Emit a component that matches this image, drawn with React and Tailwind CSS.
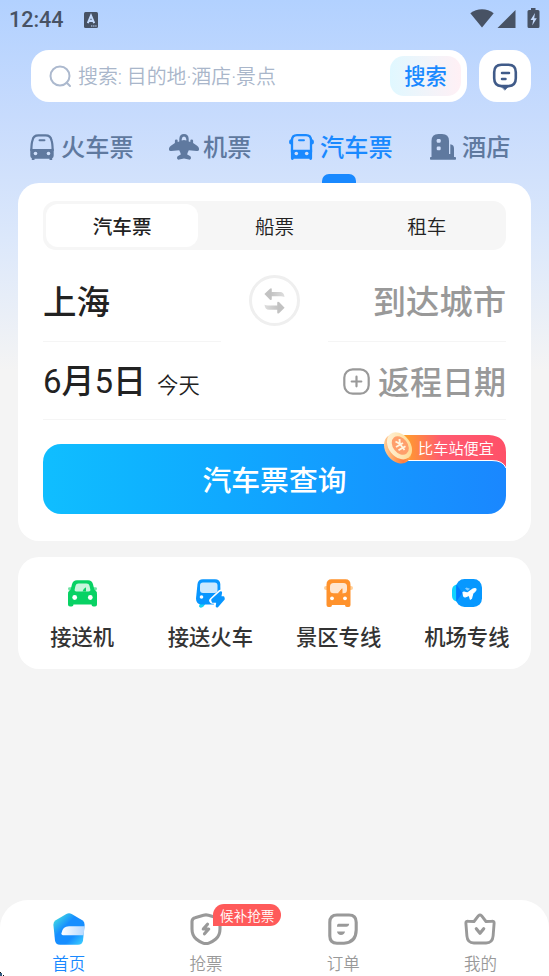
import { useState } from "react";

function ScanIcon() {
  return (
    <svg width="14" height="16" viewBox="0 0 14 16">
      <rect width="14" height="16" rx="1.5" fill="#475264" />
      <path d="M3.800 11.200 7 3.500l3.200 7.700M4.800 8.900h4.400" fill="none" stroke="#c3dafd" strokeWidth="2" />
      <path d="M7 14h6" stroke="#c3dafd" strokeWidth="1.2" strokeDasharray="1.4 0.7" />
    </svg>
  );
}

function StatusIcons() {
  return (
    <div className="flex items-start">
      <svg width="24" height="19" viewBox="0 0 24 19">
        <path d="M0.3 4.3C7-1 17-1 23.7 4.3L12 18.5Z" fill="#475264" />
      </svg>
      <svg className="ml-[3px] mt-px" width="19" height="18" viewBox="0 0 19 18">
        <path d="M18.5 0v18H0.5Z" fill="#475264" />
      </svg>
      <svg className="-mt-px ml-[11px]" width="13" height="20" viewBox="0 0 13 20">
        <path d="M4 0h4.500v2H11q1.500 0 1.500 1.500v15Q12.500 20 11 20H2Q.5 20 .5 18.500v-15Q.5 2 2 2h2Z" fill="#475264" />
        <path d="M8 5 3.500 12h2.700L5.200 17.500 9.800 10.300H7.200Z" fill="#c3dafd" />
      </svg>
    </div>
  );
}

function SearchIcon() {
  return (
    <svg width="23" height="23" viewBox="0 0 23 23" fill="none" stroke="#acb9ce" strokeWidth="2">
      <circle cx="11" cy="11" r="9.500" />
      <path d="m17.500 17.500 3.500 3.500" strokeLinecap="round" />
    </svg>
  );
}

function ChatIcon() {
  return (
    <svg width="26" height="28" viewBox="0 0 26 28" fill="none" stroke="#405b89" strokeLinecap="round">
      <path d="M9.500 1.800h7q7.300 0 7.300 7.500v6q0 7.500-7.300 7.800h-7q-7.300-.3-7.300-7.800v-6Q2.200 1.800 9.500 1.800Z" strokeWidth="2.600" />
      <path d="M9.500 23.500h7L13 27Z" fill="#405b89" strokeWidth="0.6" strokeLinejoin="round" />
      <path d="M10 10h7M10 16h3.500" strokeWidth="2.500" />
    </svg>
  );
}

function TrainIcon() {
  return (
    <svg width="24" height="26" viewBox="0 0 24 26">
      <path d="M8.500 1.300h7q5.300 0 5.900 4.800Q22.600 9 22.600 16H1.400Q1.400 9 2.600 6.100 3.200 1.300 8.500 1.300Z" fill="none" stroke="#5f799f" strokeWidth="2.200" />
      <path d="M.3 14.500Q4 17 7 17h10q3 0 6.700-2.500v7q0 2.300-1.500 2.700V26h-2.700v-1.200h-15V26H1.800v-1.800Q.3 23.800.3 21.500Z" fill="#5f799f" />
      <path d="M9.500 6.200h5" stroke="#5f799f" strokeWidth="1.900" strokeLinecap="round" />
      <circle cx="5.500" cy="19.500" r="1.800" fill="#d0e0fb" />
      <circle cx="18.500" cy="19.500" r="1.800" fill="#d0e0fb" />
    </svg>
  );
}

function PlaneIcon() {
  return (
    <svg width="30" height="26" viewBox="0 0 30 26" fill="#5f799f">
      <path d="M10.300 7V5Q10.500 0 15 0t4.700 5v2.500l1.600.5V6.700q0-1.200 1.400-1.200T24.100 6.700V9l4 2.700q2.200 1.600 1.900 4-.3 1.500-2.300 1.200l-7.900-.7q-1.500 2.800-1.600 4.300l2.800 1.500q1.300 1 .9 2.600-.5 1.400-2.100.9L15 24.500l-4.800 1q-1.600.5-2.100-.9-.4-1.600.9-2.600l2.800-1.500q-.1-1.500-1.600-4.300l-7.900.7q-2 .3-2.300-1.200-.3-2.400 1.900-4L5.900 9V6.700q0-1.200 1.400-1.200t1.400 1.200V8l1.600-.5Z" />
      <path d="M12.700 6.600V5.200Q13 2.600 15 2.600t2.300 2.600v1.400Q15 5.600 12.700 6.600Z" fill="#cfdffc" />
    </svg>
  );
}

function BusIcon() {
  return (
    <svg width="25" height="26" viewBox="0 0 25 26" fill="#1989ff">
      <path d="M8 1.200h9q5 0 5 5.300V17H3V6.500Q3 1.200 8 1.200Z" fill="none" stroke="#1989ff" strokeWidth="2.300" />
      <path d="M1.900 15.500Q4 17 7 17h11q3 0 5.100-1.500v8.800q0 1.700-1.400 1.700-1.200 0-1.400-1.200H4.700Q4.500 26 3.300 26q-1.400 0-1.400-1.700Z" />
      <path d="M2.300 5v5.500Q0 10.500 0 8t2.300-3ZM22.700 5v5.500q2.300 0 2.300-2.500T22.700 5Z" />
      <path d="M10 6.200h5" stroke="#1989ff" strokeWidth="1.900" strokeLinecap="round" />
      <circle cx="7.300" cy="19.500" r="1.800" fill="#d0e0fb" />
      <circle cx="17.700" cy="19.500" r="1.800" fill="#d0e0fb" />
    </svg>
  );
}

function HotelIcon() {
  return (
    <svg width="26" height="26" viewBox="0 0 26 26" fill="#5f799f">
      <path d="M1.500 24V7Q1.500 0 8.500 0H12q7 0 7 7v17Z" />
      <path d="M20.300 10.300q3.700.5 3.700 4.200V24h-3.700Z" />
      <path d="M.8 23h24.400q.8 0 .8 1v1q0 .7-.8.7H.8Q0 25.700 0 25v-1q0-1 .8-1ZM18 20h3v4h-3Z" />
      <rect x="6.700" y="5" width="4" height="3.800" rx="1.200" fill="#cfdffc" />
      <rect x="6.700" y="12.500" width="4" height="3.800" rx="1.200" fill="#cfdffc" />
    </svg>
  );
}

function SwapIcon() {
  return (
    <svg width="21" height="26" viewBox="0 0 21 26">
      <defs>
        <linearGradient id="swapTop" x1="0" x2="1">
          <stop offset=".3" stopColor="#c2c2c2" />
          <stop offset="1" stopColor="#dedede" />
        </linearGradient>
        <linearGradient id="swapBottom" x1="1" x2="0">
          <stop offset=".3" stopColor="#c2c2c2" />
          <stop offset="1" stopColor="#dedede" />
        </linearGradient>
      </defs>
      <path d="M.4 6 6 .7q1.800-1 1.800.8V4H16q4 0 4.500 5-1.500-.8-3.500-.8H7.800v2.600q0 1.900-1.800.9Z" fill="url(#swapTop)" />
      <path d="M20.600 19.700 15 25.200q-1.800 1-1.800-.8v-2.600H5q-4 0-4.500-5 1.500.8 3.500.8h9.200V15q0-1.900 1.800-.9Z" fill="url(#swapBottom)" />
    </svg>
  );
}

function PlusIcon() {
  return (
    <svg width="27" height="27" viewBox="0 0 27 27" fill="none" stroke="#999" strokeWidth="2.200" strokeLinecap="round">
      <rect x="1.300" y="1.300" width="24.400" height="24.400" rx="8.500" />
      <path d="M8.700 13.500h9.600M13.500 8.700v9.600" />
    </svg>
  );
}

function CoinIcon() {
  return (
    <svg width="32" height="34" viewBox="0 0 32 34">
      <defs>
        <linearGradient id="coinEdge" x1="0" y1="0" x2="1" y2="1">
          <stop offset="0" stopColor="#ffe6b8" />
          <stop offset=".45" stopColor="#ff9a55" />
          <stop offset=".65" stopColor="#ff7c3e" />
          <stop offset="1" stopColor="#ffd257" />
        </linearGradient>
        <linearGradient id="coinFace" x1="0" y1="0" x2="1" y2="1">
          <stop offset="0" stopColor="#fff6e4" />
          <stop offset="1" stopColor="#ffd584" />
        </linearGradient>
      </defs>
      <ellipse cx="14.500" cy="17" rx="11.700" ry="16" transform="rotate(-38 14.500 17)" fill="url(#coinEdge)" />
      <ellipse cx="16.500" cy="13.800" rx="10.800" ry="15" transform="rotate(-38 16.500 13.800)" fill="url(#coinFace)" />
      <ellipse cx="17.300" cy="13.500" rx="7.300" ry="10.300" transform="rotate(-38 17.300 13.500)" fill="#ff9f6b" />
      <path d="m12.500 9.500 4.300 2.300L16.500 7M16.800 11.800l4.700 6.200M13 15l7-4M15.500 18.300l7-4" fill="none" stroke="#fff5df" strokeWidth="1.900" />
    </svg>
  );
}

function CarIcon() {
  return (
    <svg width="29" height="27" viewBox="0 0 29 27">
      <path d="M0 8.500q0-1.300 1.500-1.300H5v3.500H2Q0 10.700 0 8.500ZM29 8.500q0-1.300-1.500-1.300H24v3.500h3q2 0 2-2.200Z" fill="#70e3a3" />
      <path d="M9 .3h11q4 0 5 4L26.300 9.500q2.700 1.500 2.700 5v10q0 2-2 2h-1.500q-2 0-2-2h-18q0 2-2 2H2q-2 0-2-2v-10q0-3.500 2.700-5L4 4.300q1-4 5-4Z" fill="#08d264" />
      <path d="M10.500 3.500h8q2.500 0 3 2.300l.9 3.900q.3 1.800-1.700 1.800H8.300q-2 0-1.700-1.800l.9-3.900q.5-2.300 3-2.300Z" fill="#c8f5dc" />
      <path d="M14.500 11.500q.7-2.800 3.500-4.200v4.200Z" fill="#08d264" />
      <circle cx="6.700" cy="17.500" r="2.400" fill="#fff" />
      <circle cx="22.300" cy="17.500" r="2.400" fill="#fff" />
    </svg>
  );
}

function ExpressIcon() {
  return (
    <svg width="29" height="29" viewBox="0 0 29 29">
      <path d="M5 24h5l-2.500 3.500q-1.500 1.500-3.500 1-1.700-.8-.7-2.500Z" fill="#14d2f5" />
      <path d="M7 .3h12Q24 .3 24.300 5l.2 15q0 5.500-6 5.500H6q-6 0-6-6L1.500 5Q2 .3 7 .3Z" fill="#0896ff" />
      <rect x="4" y="3.600" width="17.500" height="10.500" rx="3" fill="#c9e8ff" />
      <circle cx="5.500" cy="18" r="1.800" fill="#fff" />
      <path d="M24.500 14 16.500 21.500h5L21 27l6-7-3.200-1Z" fill="#fff" stroke="#fff" strokeWidth="6.500" strokeLinejoin="round" />
      <path d="M24.800 13.500 16.500 21l.5 1.500h4.700L21 27.300 27.500 20l-.3-1.500-3.200-.3Z" fill="#0896ff" stroke="#0896ff" strokeWidth="2.600" strokeLinejoin="round" />
    </svg>
  );
}

function CoachIcon() {
  return (
    <svg width="29" height="28" viewBox="0 0 29 28">
      <rect y="7" width="29" height="4" rx="2" fill="#ffd09a" />
      <path d="M7.500.3h14q5 0 5 5.500V26q0 2-2 2h-1.700q-1.800 0-1.800-2H8q0 2-1.800 2H4.500q-2 0-2-2V5.800q0-5.500 5-5.500Z" fill="#ff922c" />
      <rect x="6" y="4" width="17" height="10.300" rx="3.500" fill="#ffe6cf" />
      <path d="M14.500 14.300 18 9.800v4.500Z" fill="#ff922c" stroke="#ff922c" strokeWidth="1" strokeLinejoin="round" />
      <circle cx="8" cy="19.300" r="1.900" fill="#fff" />
      <circle cx="21" cy="19.300" r="1.900" fill="#fff" />
    </svg>
  );
}

function AirportIcon() {
  return (
    <svg width="30" height="28" viewBox="0 0 30 28">
      <path d="M5.500 5.200V22.800Q0 21.500 0 17v-6Q0 6.500 5.500 5.200Z" fill="#10d3ff" />
      <rect x="4" width="26" height="28" rx="8.500" fill="#0798ff" />
      <path d="M4.300 5.500 10.500 14l-6.200 8.500Z" fill="#007bff" />
      <path d="m13 9.500 1.500-1 3.500 1.200-2.500 2Z" fill="#84ccff" />
      <path d="m11 13.500 1-.5 3.500 1 5.500-4q2.300-1 3 0 .4 1.200-1.200 2.600l-2 1.700-1.300 5-1.200.9-1-4-3.500 1.500q-1.400.5-2.200-.8Z" fill="#fff" stroke="#fff" strokeWidth="1.200" strokeLinejoin="round" />
    </svg>
  );
}

function HomeIcon() {
  return (
    <svg width="32" height="32" viewBox="0 0 32 32">
      <defs>
        <linearGradient id="home" x1="0" y1="0" x2="1" y2="1">
          <stop offset=".08" stopColor="#45dfe0" />
          <stop offset=".4" stopColor="#168eff" />
          <stop offset=".68" stopColor="#168eff" />
          <stop offset="1" stopColor="#43d9ff" />
        </linearGradient>
        <linearGradient id="homeCap" x1="0" x2="1">
          <stop offset="0" stopColor="#fff" />
          <stop offset="1" stopColor="#b4d7ff" />
        </linearGradient>
      </defs>
      <path d="M13.300 1q2.700-1.500 5.400 0l11 6.500Q31.700 9 31.600 12L30 27.500q-.6 4.200-5 4.200H7q-4.400 0-5-4.200L.4 12Q.3 9 2.300 7.500Z" fill="url(#home)" />
      <path d="M16 13.300h15.500l-.8 9H10q-1.700 0-1.500-2Q9.500 13.300 16 13.300Z" fill="url(#homeCap)" />
    </svg>
  );
}

function ShieldIcon() {
  return (
    <svg width="32" height="32" viewBox="0 0 32 32" fill="none" stroke="#999" strokeLinejoin="round">
      <path d="M13.500 2.200q2.500-.6 5 0l8.500 2.500Q30 5.500 30 8.500V16q0 6.500-4.200 10-3.300 2.700-6.300 3.900-3.500 1.400-7 0-3-1.200-6.300-3.900Q2 22.500 2 16V8.500q0-3 3-3.800Z" strokeWidth="3.100" />
      <path d="m17.500 11.300-4.200 4.700h5.400l-4.200 4.700" strokeWidth="3.200" strokeLinecap="round" />
    </svg>
  );
}

function OrderIcon() {
  return (
    <svg width="30" height="32" viewBox="0 0 30 32" fill="none" stroke="#999">
      <path d="M9 2h12q7.200 0 7.200 7.200V17Q28 29.500 16 30.200H9q-7.200 0-7.200-7.200V9.200Q1.800 2 9 2Z" strokeWidth="3.100" />
      <path d="M10.500 10.800h10.700q-.3 3-3 3H9Q9 10.800 10.500 10.800ZM9 18.500h8q-.6 3.400-4 3.400t-4-3.400Z" fill="#999" stroke="none" />
    </svg>
  );
}

function MineIcon() {
  return (
    <svg width="32" height="32" viewBox="0 0 32 32" fill="none" stroke="#999" strokeLinejoin="round" strokeLinecap="round">
      <path d="m10 8.500 4.500-5.800q1.500-1.500 3 0L22 8.500l5.800-.3q2.500-.2 2.300 2.200l-1 12.600q-.6 7-7 7H9.900q-6.400 0-7-7l-1-12.600Q1.700 8 4.200 8.200Z" strokeWidth="2.900" />
      <path d="m12.300 15.700 3.700 4.500 3.700-4.500" strokeWidth="3.200" />
    </svg>
  );
}

const modes = [
  { label: "火车票", icon: <TrainIcon />, box: "w-[139px] gap-[7px]" },
  { label: "机票", icon: <PlaneIcon />, box: "w-[120px] gap-1" },
  { label: "汽车票", icon: <BusIcon />, box: "w-[141px] gap-[6px]", active: true },
  { label: "酒店", icon: <HotelIcon />, box: "gap-[6px]" },
];

const shortcuts = [
  { label: "接送机", icon: <CarIcon /> },
  { label: "接送火车", icon: <ExpressIcon /> },
  { label: "景区专线", icon: <CoachIcon /> },
  { label: "机场专线", icon: <AirportIcon /> },
];

const navItems = [
  { label: "首页", icon: <HomeIcon />, active: true },
  { label: "抢票", icon: <ShieldIcon />, badge: "候补抢票" },
  { label: "订单", icon: <OrderIcon /> },
  { label: "我的", icon: <MineIcon /> },
];

export default function App() {
  const [kind, setKind] = useState("汽车票");

  return (
    <div className="relative flex h-[976px] w-[549px] flex-col overflow-hidden whitespace-nowrap bg-[#f4f4f4] bg-[linear-gradient(180deg,#b2d1ff_0px,#c7dbfd_115px,#dce8fb_240px,#f4f4f4_370px)] font-['Roboto','Noto_Sans_CJK_SC',sans-serif] text-[#222]">
      <header className="flex h-[50px] items-start justify-between pl-[9px] pr-[9px]">
        <div className="flex items-center pt-1.5">
          <span className="w-[75px] pt-px text-[21.500px] font-medium leading-[26px] text-[#475264]">12:44</span>
          <ScanIcon />
        </div>
        <div className="pt-[9px]">
          <StatusIcons />
        </div>
      </header>

      <div className="flex gap-3 pl-[31px] pr-[18px]">
        <div className="flex h-[52px] w-[436px] items-center rounded-[18px] bg-white pl-[18px] pr-1.5">
          <SearchIcon />
          <span className="ml-1.5 flex-1 pt-1 text-[19.900px] font-[350] text-[#a9b6ca]">搜索: 目的地·酒店·景点</span>
          <button className="h-10 w-[71px] rounded-[14px] bg-gradient-to-r from-[#e0f8ff] to-[#fff0f5] pt-0.5 text-[21.300px] font-medium leading-[38px] text-[#1989ff]">
            搜索
          </button>
        </div>
        <button className="flex h-[52px] w-[52px] items-center justify-center rounded-[18px] bg-white pt-px">
          <ChatIcon />
        </button>
      </div>

      <nav className="flex h-[81px] pl-[30px] pt-[27px]">
        {modes.map((m) => (
          <div key={m.label} className={`relative flex h-9 items-center ${m.box} ${m.active ? "text-[#1989ff]" : "text-[#5f799f]"}`}>
            {m.icon}
            <span className="pt-0.5 text-[24.200px] font-medium leading-9">{m.label}</span>
            {m.active && <span className="absolute left-[33px] top-[45px] h-[9px] w-[34px] rounded-t-[7px] bg-[#1989ff]" />}
          </div>
        ))}
      </nav>

      <main className="mx-[18px] h-[358px] rounded-[21px] bg-white px-[25px] pt-[18px]">
        <div className="flex h-[49px] rounded-[13px] bg-[#f6f6f6] p-[3px]">
          {["汽车票", "船票", "租车"].map((k) => (
            <button
              key={k}
              onClick={() => setKind(k)}
              className={`h-[43px] flex-1 rounded-xl pt-0.5 text-[19.600px] leading-[43px] ${kind === k ? "bg-white font-medium" : "font-[350]"}`}
            >
              {k}
            </button>
          ))}
        </div>

        <div className="relative flex h-[92px] justify-between">
          <div className="w-[178px] border-b border-[#f5f5f5] text-[33.500px] font-medium leading-[105px]">上海</div>
          <button className="-ml-px mt-[25px] flex h-[51px] w-[51px] items-center justify-center rounded-full border-[3px] border-[#efefef]">
            <SwapIcon />
          </button>
          <div className="w-[178px] border-b border-[#f5f5f5] text-right text-[33.300px] font-medium leading-[105px] text-[#999]">
            到达城市
          </div>
        </div>

        <div className="flex h-[78px] items-center justify-between border-b border-[#f5f5f5]">
          <div className="flex items-baseline pt-[3px]">
            <span className="text-[33px] font-[450] leading-[78px]">6月5日</span>
            <span className="ml-[11px] text-[21.300px] font-[350]">今天</span>
          </div>
          <div className="flex items-center gap-2 text-[#999]">
            <span className="pt-px">
              <PlusIcon />
            </span>
            <span className="pt-1 text-[32px] font-medium leading-[78px]">返程日期</span>
          </div>
        </div>

        <div className="relative mt-6">
          <button className="h-[70px] w-full rounded-[18px] bg-gradient-to-r from-[#10beff] to-[#1a87ff] pt-0.5 text-[28.800px] font-medium leading-[70px] text-white">
            汽车票查询
          </button>
          <div className="absolute -top-[9px] right-0 h-[34px] w-[112px]">
            <svg className="absolute inset-0" width="112" height="34" viewBox="0 0 112 34">
              <defs>
                <linearGradient id="promo" x1="0" x2="1">
                  <stop offset="0" stopColor="#ffab1e" />
                  <stop offset=".4" stopColor="#ff5b70" />
                  <stop offset="1" stopColor="#ff5068" />
                </linearGradient>
              </defs>
              <path d="M4 0h91q17 1 17 17v16q-3-7.500-14-7.500H4Z" fill="url(#promo)" />
              <path d="M4 25.500h94q11 0 14 7.500" fill="none" stroke="#fff" strokeWidth="1" />
            </svg>
            <span className="absolute left-[24px] top-px text-[15.200px] font-[350] leading-[26px] text-white">比车站便宜</span>
            <span className="absolute -left-[11px] -top-[3px]">
              <CoinIcon />
            </span>
          </div>
        </div>
      </main>

      <section className="mx-[18px] mt-4 grid h-[112px] grid-cols-4 rounded-[21px] bg-white pt-[22px]">
        {shortcuts.map((s) => (
          <div key={s.label} className="flex flex-col items-center">
            <span className="flex h-7 items-center">{s.icon}</span>
            <span className="mt-[15px] text-[21.300px] font-medium leading-8 text-[#333]">{s.label}</span>
          </div>
        ))}
      </section>

      <footer className="mt-auto grid h-[76px] grid-cols-4 rounded-t-[28px] bg-white pt-[13px]">
        {navItems.map((n) => (
          <div key={n.label} className={`relative flex flex-col items-center ${n.active ? "text-[#1989ff]" : "text-[#999]"}`}>
            {n.icon}
            <span className="mt-2 text-[16.500px] font-[350] leading-6">{n.label}</span>
            {n.badge && (
              <span className="absolute -top-[9px] left-[76px] h-[22px] w-[68px] rounded-[11px] rounded-bl-none bg-[#ff5a5a] pt-px text-center text-[13.600px] font-[350] leading-[22px] text-white">
                {n.badge}
              </span>
            )}
          </div>
        ))}
      </footer>

      {/* corner speck */}
      <svg className="absolute bottom-0 left-0" width="4" height="4" viewBox="0 0 4 4">
        <path d="M0 0h1v1h1v3H0Z" fill="#315b82" />
        <path d="M0 0h1v1H0ZM3 3h1v1H3Z" fill="#111" />
      </svg>
    </div>
  );
}
